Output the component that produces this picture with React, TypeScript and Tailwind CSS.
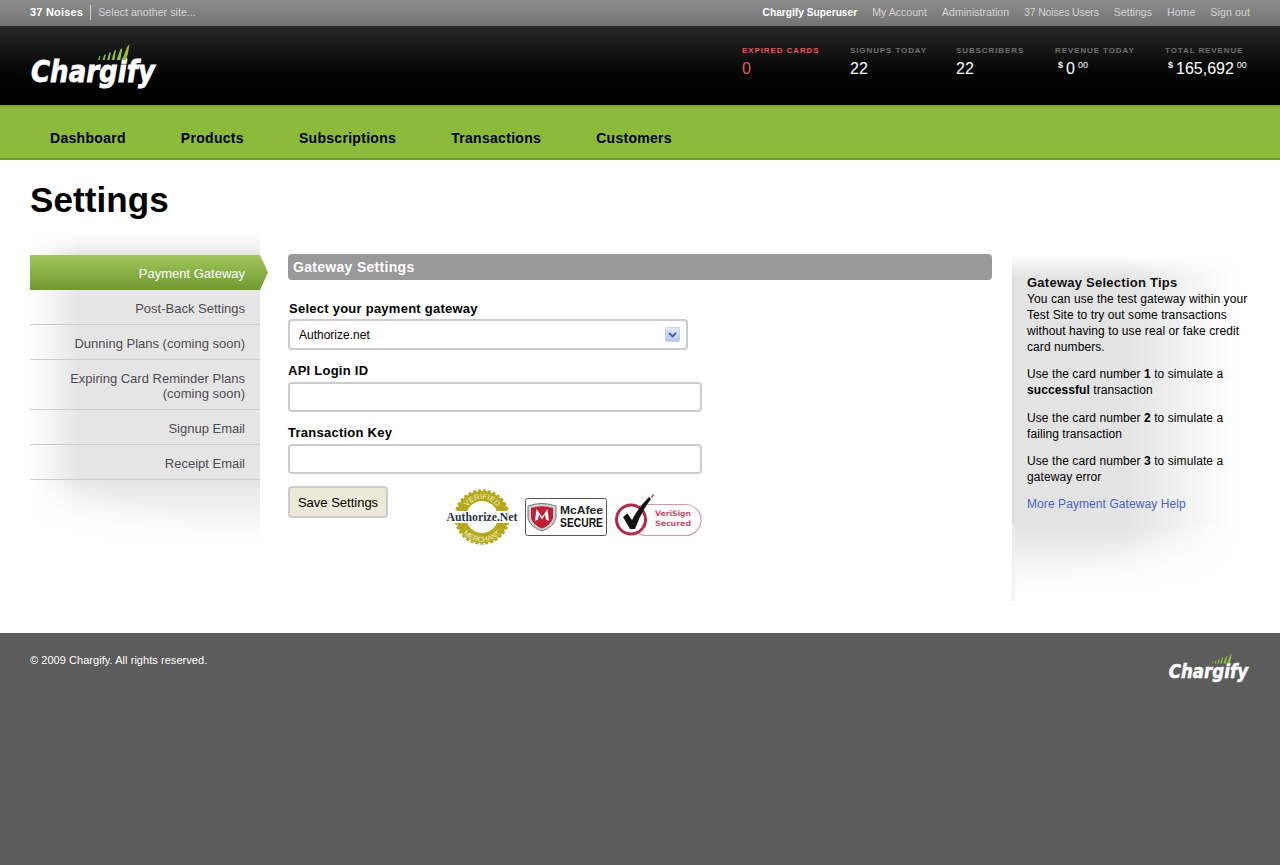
import React from 'react';

const sans = "font-['Liberation_Sans',Arial,sans-serif]";

const Logo: React.FC<{ className?: string }> = ({ className }) => (
  <svg viewBox="0 0 128 46" className={className}>
    <text
      x="1"
      y="38"
      fill="#fff"
      stroke="#fff"
      strokeWidth="0.8"
      fontFamily="'DejaVu Sans', sans-serif"
      fontSize="30"
      fontWeight="700"
      fontStyle="italic"
      textLength="124"
      lengthAdjust="spacingAndGlyphs"
    >
      Chargify
    </text>
    <g fill="#8fc03c">
      <path d="M68 16l1.500-4 1 0-1 4z" />
      <path d="M72.500 16l2-5.500 1.200 0-1 5.500z" />
      <path d="M77 16l2.500-7.500 1.300 0-1.300 7.500z" />
      <path d="M81.500 16l3-9.500 1.500-.5-1.500 10z" />
      <path d="M86.500 16l4-11 1.800-.5-2 11.500z" />
      <path d="M92 16l5-13 2.500-2.500-1.500 9-2 6.500z" />
    </g>
  </svg>
);

const AuthorizeBadge = () => (
  <svg viewBox="0 0 72 58" className="w-[72px] h-[58px]">
    <defs>
      <clipPath id="sealClip">
        <rect x="0" y="0" width="72" height="22" />
        <rect x="0" y="34" width="72" height="24" />
      </clipPath>
      <path id="arcTop" d="M18 28a18 18 0 0 1 36 0" />
      <path id="arcBottom" d="M11 28a25 25 0 0 0 50 0" />
    </defs>
    <g clipPath="url(#sealClip)">
      <circle cx="36" cy="28" r="21" fill="none" stroke="#b5a81c" strokeWidth="10" />
      <circle cx="36" cy="28" r="26.500" fill="none" stroke="#b5a81c" strokeWidth="2.500" strokeDasharray="3 2" />
    </g>
    <text fontFamily="'Liberation Sans', sans-serif" fontSize="7.500" fill="#f3efc4">
      <textPath href="#arcTop" startOffset="50%" textAnchor="middle">VERIFIED</textPath>
    </text>
    <text fontFamily="'Liberation Sans', sans-serif" fontSize="7.500" fill="#f3efc4">
      <textPath href="#arcBottom" startOffset="50%" textAnchor="middle">MERCHANT</textPath>
    </text>
    <text x="36" y="32" textAnchor="middle" fontFamily="'Liberation Serif', serif" fontWeight="700" fontSize="12" fill="#1f3547" textLength="71" lengthAdjust="spacingAndGlyphs">
      Authorize.Net
    </text>
  </svg>
);

const McAfeeBadge = () => (
  <svg viewBox="0 0 82 38" className="w-[82px] h-[38px]">
    <rect x="0.500" y="0.500" width="81" height="37" rx="2" fill="#fff" stroke="#555" />
    <path d="M3 8q14-5 28 0l0 12q-2 9-14 13q-12-4-14-13z" fill="#cfcfcf" stroke="#777" />
    <path d="M6 10q11-3.500 22 0l0 10q-2 7-11 10.500q-9-3.500-11-10.500z" fill="#c01f35" />
    <path d="M10 23l1.500-12 5.500 8 5.500-8 1.500 12-3-1.500-1-5-3 5-3-5-1 5z" fill="#fff" />
    <text x="35" y="15.500" fontFamily="'Liberation Sans', sans-serif" fontWeight="700" fontSize="11.500" fill="#222" textLength="43" lengthAdjust="spacingAndGlyphs">McAfee</text>
    <text x="35" y="29" fontFamily="'Liberation Sans', sans-serif" fontWeight="700" fontSize="13" fill="#111" textLength="43" lengthAdjust="spacingAndGlyphs">SECURE</text>
  </svg>
);

const VerisignBadge = () => (
  <svg viewBox="0 0 87 48" className="w-[87px] h-[48px]">
    <rect x="16" y="14.500" width="70" height="31" rx="15.500" fill="#fff" stroke="#d59aa5" strokeWidth="1.200" />
    <circle cx="16" cy="29.500" r="14.500" fill="#fff" stroke="#b22a4b" strokeWidth="3" />
    <path d="M8 27l4.500-3.500 4.500 6.500q6-12 17-23l2 2q-10 13-16 30l-5 0z" fill="#111" />
    <path d="M36 7l2-3 1 1-2 3z" fill="#b22a4b" />
    <text x="40" y="26" fontFamily="'DejaVu Sans', sans-serif" fontWeight="700" fontSize="7.500" fill="#c2506a" textLength="36" lengthAdjust="spacingAndGlyphs">VeriSign</text>
    <text x="40" y="36" fontFamily="'DejaVu Sans', sans-serif" fontWeight="700" fontSize="7.500" fill="#c2506a" textLength="36" lengthAdjust="spacingAndGlyphs">Secured</text>
  </svg>
);

const Stat: React.FC<{ label: string; width: string; red?: boolean; children: React.ReactNode }> = ({ label, width, red, children }) => (
  <div className={width}>
    <div className={`text-[8px] leading-[10px] font-bold tracking-[0.9px] whitespace-nowrap ${red ? 'text-[#e05a5a]' : 'text-[#6f6f6f]'}`}>{label}</div>
    <div className={`mt-[2px] text-[16px] leading-[22px] whitespace-nowrap ${red ? 'text-[#e05a5a]' : 'text-white'}`}>{children}</div>
  </div>
);

const Money: React.FC<{ value: string; indent: string }> = ({ value, indent }) => (
  <span className={`flex items-start ${indent}`}>
    <span className="text-[9px] leading-[10px] font-bold mt-[2px] mr-[3px]">$</span>
    <span>{value}</span>
    <span className="text-[9px] leading-[10px] mt-[2px] ml-[3px]">00</span>
  </span>
);

const sideItems = ['Post-Back Settings', 'Dunning Plans (coming soon)', 'Expiring Card Reminder Plans (coming soon)', 'Signup Email', 'Receipt Email'];

const inputClass = 'block w-[414px] h-[30px] bg-white border-2 border-[#cccccc] rounded-[4px] outline-none';
const labelClass = 'block text-[13px] leading-[18px] font-bold tracking-[0.25px] text-black';

export default function App() {
  return (
    <div className={`min-h-[865px] bg-[#5c5c5c] ${sans}`}>
      <div className="h-[26px] bg-gradient-to-b from-[#8c8c8c] to-[#747474] flex items-center justify-between px-[30px] pb-[1px] text-[10.6px] text-[#d4d4d4]">
        <div className="flex items-center">
          <span className="font-bold text-[11px] text-white tracking-[0.2px] pr-[7px] border-r border-[#cfcfcf] leading-[15px]">37 Noises</span>
          <span className="pl-[7px] tracking-[0.05px]">Select another site...</span>
        </div>
        <div className="flex gap-[15px]">
          <span className="font-bold text-[10.2px] text-white">Chargify Superuser</span>
          <span>My Account</span>
          <span>Administration</span>
          <span className="tracking-[-0.2px]">37 Noises Users</span>
          <span>Settings</span>
          <span>Home</span>
          <span className="tracking-[0.1px]">Sign out</span>
        </div>
      </div>

      <div className="h-[79px] bg-gradient-to-b from-[#2b2b2b] to-[#000000] flex justify-between pl-[30px]">
        <Logo className="w-[128px] h-[46px] mt-[18px]" />
        <div className="flex pt-[20px]">
          <Stat label="EXPIRED CARDS" width="w-[108px]" red>0</Stat>
          <Stat label="SIGNUPS TODAY" width="w-[106px]">22</Stat>
          <Stat label="SUBSCRIBERS" width="w-[99px]">22</Stat>
          <Stat label="REVENUE TODAY" width="w-[110px]"><Money value="0" indent="pl-[3px]" /></Stat>
          <Stat label="TOTAL REVENUE" width="w-[115px]"><Money value="165,692" indent="pl-[3px]" /></Stat>
        </div>
      </div>

      <nav className="h-[55px] bg-[#8cbb3c] border-t-2 border-b-2 border-t-[#7da835] border-b-[#6f9a33] flex items-center gap-[55px] pl-[50px] pt-[12px] text-[14px] font-bold tracking-[0.3px] text-black">
        <span>Dashboard</span>
        <span>Products</span>
        <span>Subscriptions</span>
        <span>Transactions</span>
        <span>Customers</span>
      </nav>

      <main className="h-[473px] bg-white px-[30px]">
        <h1 className="h-[75px] pt-[18px] text-[35px] leading-[44px] font-bold tracking-[0.1px] text-black">Settings</h1>
        <div className="flex items-start">
          <aside className="w-[230px] shrink-0">
            <div className="pt-[20px] bg-[linear-gradient(to_right,#ffffff,rgba(255,255,255,0)_50px),linear-gradient(to_bottom,#ffffff,#e5e5e5_20px)]">
              <div className="relative h-[35px] flex items-center justify-end pt-[2px] pr-[15px] text-[13px] text-white bg-gradient-to-b from-[#a2c65c] to-[#6f9a2e]">
                Payment Gateway
                <div className="absolute left-full top-0 h-[35px] w-[8px] bg-gradient-to-b from-[#a2c65c] to-[#6f9a2e] [clip-path:polygon(0_0,100%_50%,0_100%)]" />
              </div>
              {sideItems.map((item) => (
                <div key={item} className="border-b border-[#cccccc] pt-[11px] pb-[8px] pl-[20px] pr-[15px] text-right text-[13px] leading-[15px] text-[#4f4b52]">
                  {item}
                </div>
              ))}
            </div>
            <div className="h-[73px] bg-[linear-gradient(to_right,#ffffff,rgba(255,255,255,0)_50px),linear-gradient(to_top_right,#ffffff_22%,rgba(255,255,255,0)_62%),linear-gradient(to_bottom,#e5e5e5,#ffffff_62px)]" />
          </aside>

          <section className="w-[704px] shrink-0 ml-[28px] mt-[19px]">
            <h2 className="h-[26px] bg-[#999999] rounded-[4px] pl-[5px] text-[14px] leading-[26px] font-bold tracking-[0.3px] text-white">Gateway Settings</h2>
            <label className={`${labelClass} mt-[20px] ml-[1px]`}>Select your payment gateway</label>
            <div className="mt-[1px] w-[400px] h-[31px] bg-white border-2 border-[#cccccc] rounded-[4px] flex items-center justify-between pl-[9px] pr-[6px] text-[12px] text-black">
              <span>Authorize.net</span>
              <span className="w-[15px] h-[15px] rounded-[2px] bg-gradient-to-b from-[#dfe8fb] to-[#b4c8f2] border border-[#c3d2f3] flex items-center justify-center">
                <svg viewBox="0 0 9 6" className="w-[9px] h-[6px]">
                  <path d="M1 1l3.500 3.500L8 1" fill="none" stroke="#4d6185" strokeWidth="1.800" />
                </svg>
              </span>
            </div>
            <label className={`${labelClass} mt-[12px]`}>API Login ID</label>
            <input className={`${inputClass} mt-[2px]`} />
            <label className={`${labelClass} mt-[12px]`}>Transaction Key</label>
            <input className={`${inputClass} mt-[2px]`} />
            <div className="flex w-[414px] justify-between mt-[12px]">
              <button className="w-[100px] h-[32px] pt-[1px] bg-[#ece9d8] border-2 border-[#cccccc] rounded-[4px] text-[13px] text-black">Save Settings</button>
              <div className="flex items-start mt-[3px]">
                <AuthorizeBadge />
                <div className="ml-[7px] mt-[9px]"><McAfeeBadge /></div>
                <div className="ml-[8px] mt-[1px]"><VerisignBadge /></div>
              </div>
            </div>
          </section>

          <aside className="w-[238px] shrink-0 ml-[20px] mt-[20px]">
            <div className="h-[270px] pt-[19px] pl-[15px] pr-[2px] text-[12px] leading-[16px] tracking-[0.08px] text-black bg-[#e3e3e3] bg-[linear-gradient(to_right,rgba(255,255,255,0)_110px,#ffffff_225px),linear-gradient(to_bottom,#ffffff,rgba(255,255,255,0)_22px),linear-gradient(to_right,#dadada,rgba(218,218,218,0)_4px)]">
              <h3 className="text-[13px] leading-[17px] font-bold tracking-[0.25px] text-[#111111]">Gateway Selection Tips</h3>
              <p className="mb-[11.3px]">You can use the test gateway within your Test Site to try out some transactions without having to use real or fake credit card numbers.</p>
              <p className="mb-[11.3px]">Use the card number <b>1</b> to simulate a <b>successful</b> transaction</p>
              <p className="mb-[11.3px]">Use the card number <b>2</b> to simulate a failing transaction</p>
              <p className="mb-[11.3px]">Use the card number <b>3</b> to simulate a gateway error</p>
              <a className="text-[#4a63c4]">More Payment Gateway Help</a>
            </div>
            <div className="h-[76px] bg-[linear-gradient(to_right,#ececec,rgba(236,236,236,0)_4px),linear-gradient(to_right,rgba(255,255,255,0)_110px,#ffffff_225px),linear-gradient(to_top_left,#ffffff_25%,rgba(255,255,255,0)_65%),linear-gradient(to_bottom,#e3e3e3,#ffffff_66px)]" />
          </aside>
        </div>
      </main>

      <footer className="flex justify-between items-start px-[30px] pt-[20px] text-[11px] leading-[14px] tracking-[0.05px] text-white">
        <span>© 2009 Chargify. All rights reserved.</span>
        <Logo className="w-[82px] h-[30px]" />
      </footer>
    </div>
  );
}
